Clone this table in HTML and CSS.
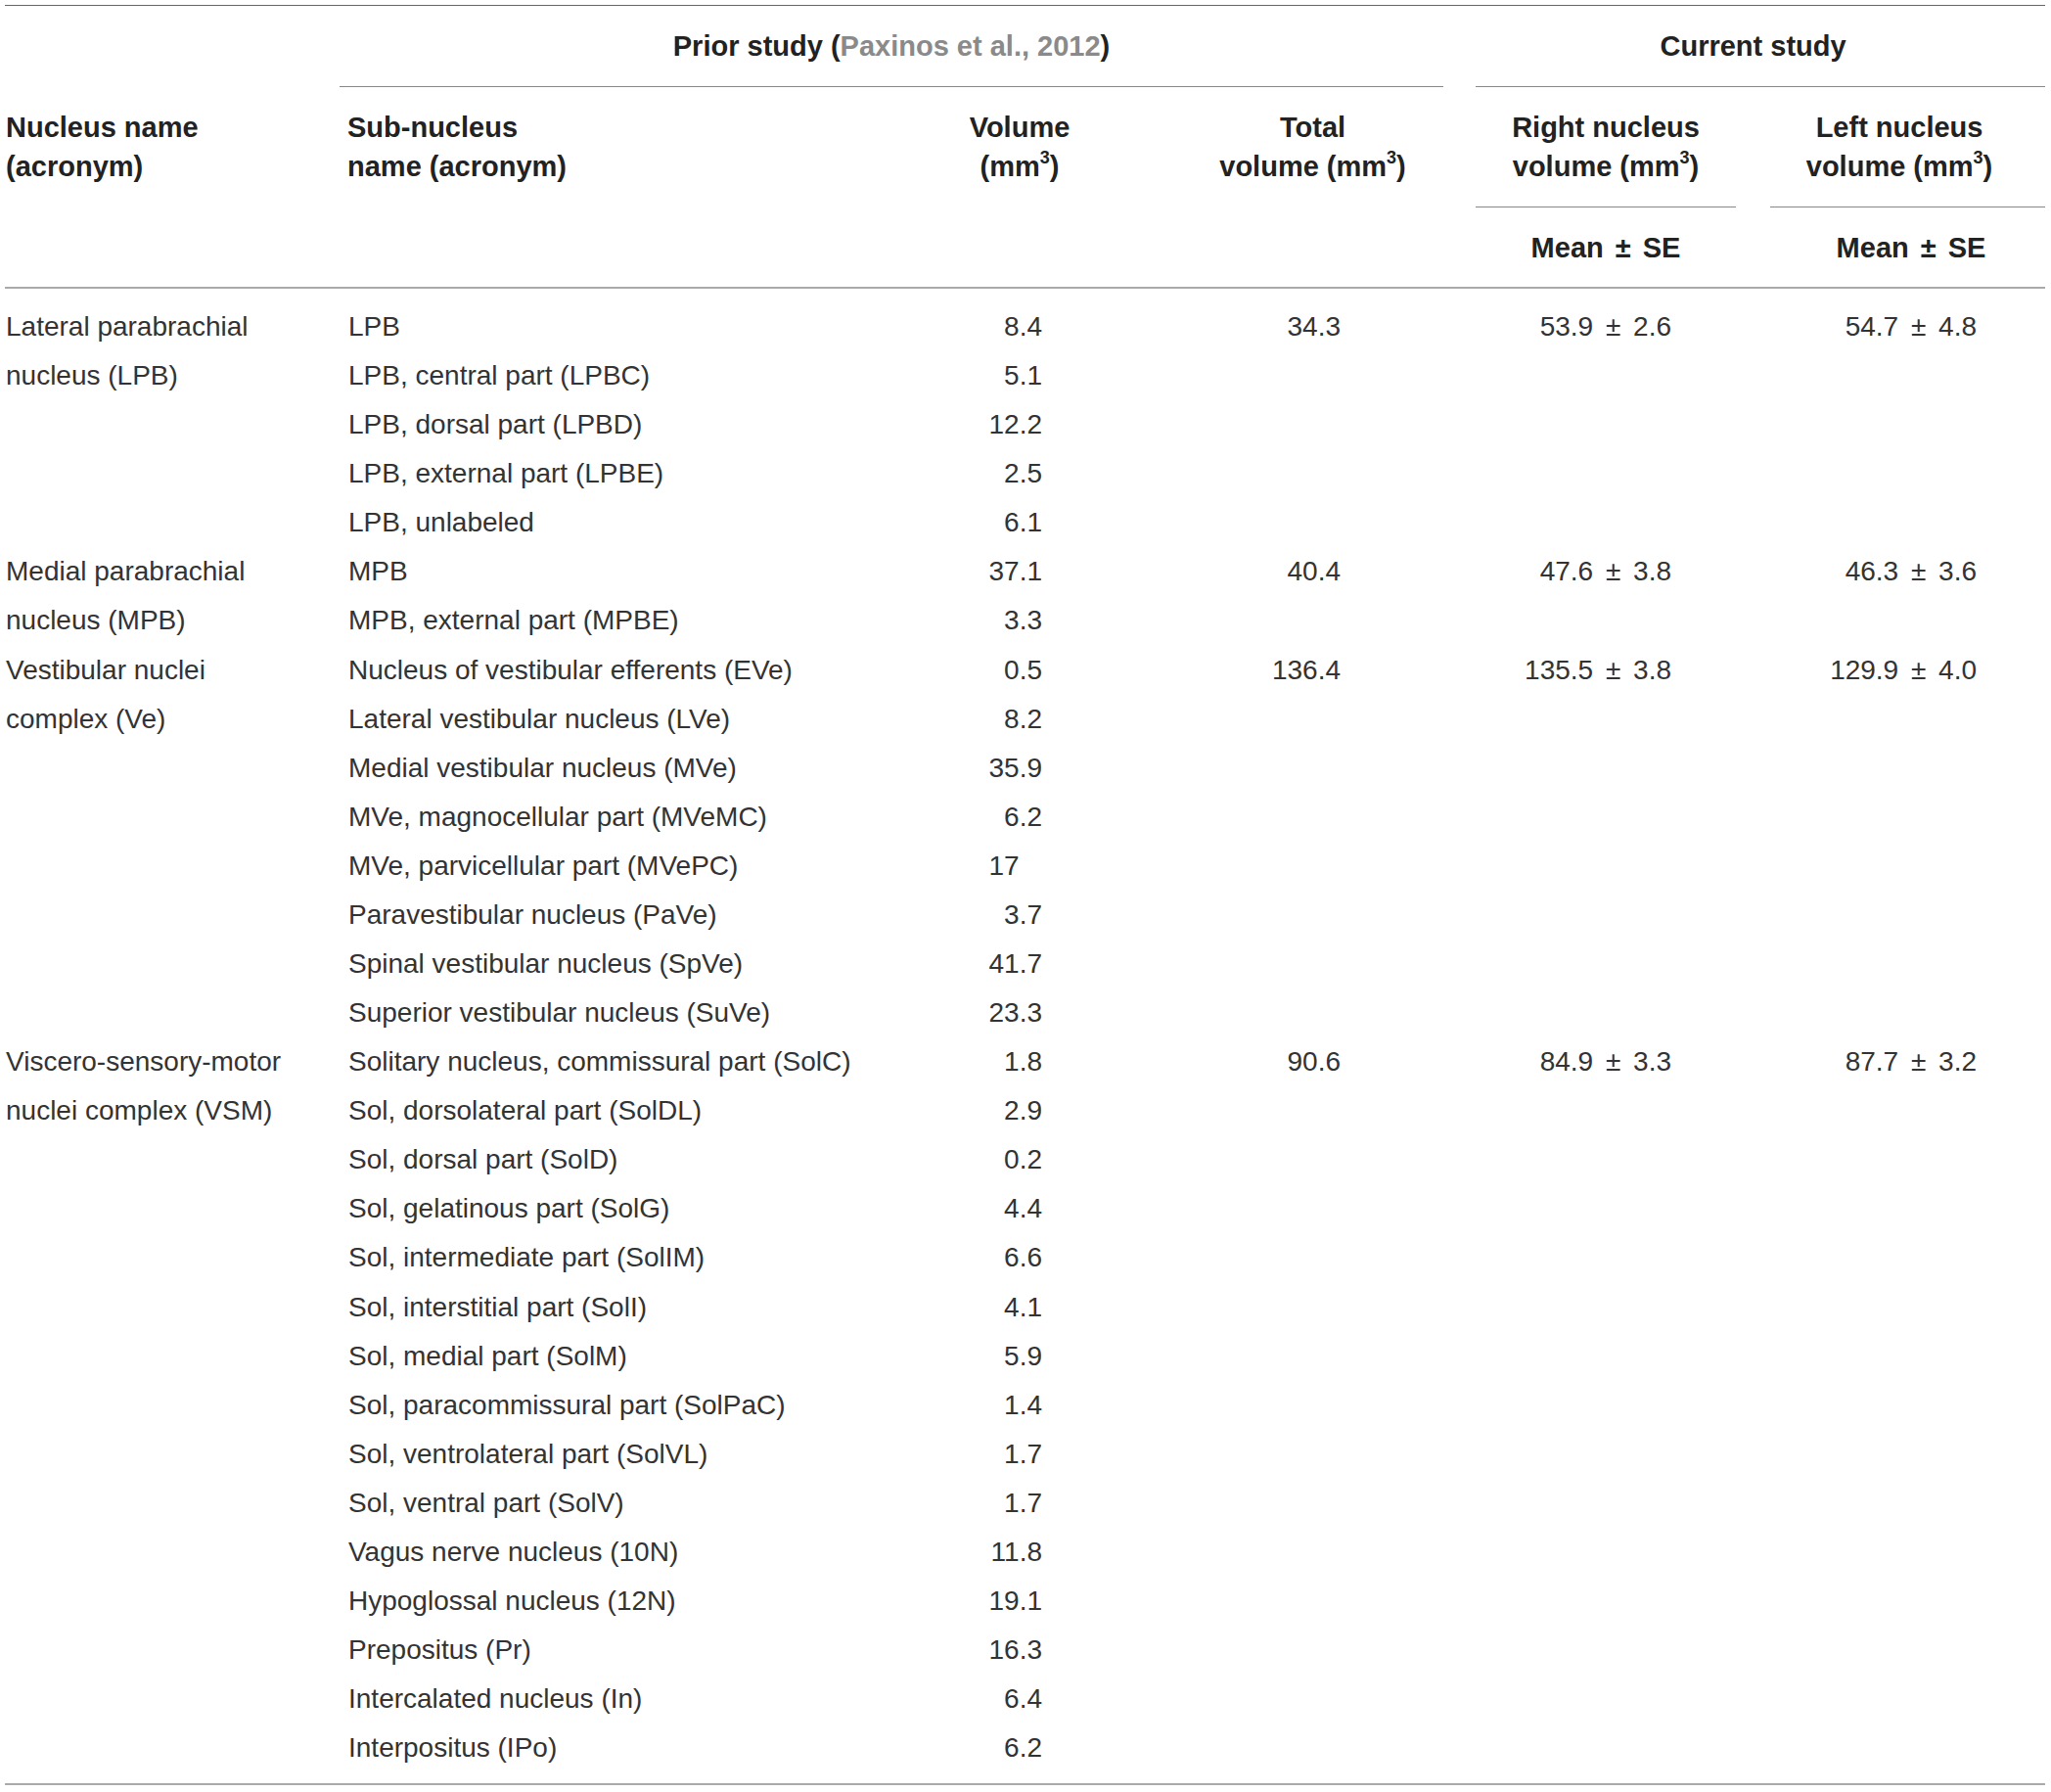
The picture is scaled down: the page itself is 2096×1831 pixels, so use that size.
FILE: index.html
```html
<!DOCTYPE html>
<html lang="en">
<head>
    <meta charset="UTF-8">
    <title>Nucleus volumes</title>
    <link rel="stylesheet" href="styles.css">
</head>
<body>
    <table class="volumes">
        <colgroup>
            <col class="c-name">
            <col class="c-sub">
            <col class="c-vol">
            <col class="c-total">
            <col class="c-gap1">
            <col class="c-right">
            <col class="c-gap2">
            <col class="c-left">
        </colgroup>
        <thead>
            <tr>
                <th rowspan="3" class="name">Nucleus name<br>(acronym)</th>
                <th colspan="3" class="group">Prior study (<a href="#">Paxinos et al., 2012</a>)</th>
                <th rowspan="3"></th>
                <th colspan="3" class="group current">Current study</th>
            </tr>
            <tr>
                <th rowspan="2" class="sub">Sub-nucleus<br>name (acronym)</th>
                <th rowspan="2" class="mid">Volume<br>(mm<sup>3</sup>)</th>
                <th rowspan="2" class="mid">Total<br>volume (mm<sup>3</sup>)</th>
                <th class="mid ruled">Right nucleus<br>volume (mm<sup>3</sup>)</th>
                <th></th>
                <th class="mid ruled left-head">Left nucleus<br>volume (mm<sup>3</sup>)</th>
            </tr>
            <tr>
                <th class="mid stat">Mean ± SE</th>
                <th></th>
                <th class="mid stat left-stat">Mean ± SE</th>
            </tr>
        </thead>
        <tbody>
            <tr class="first">
                <td rowspan="5" class="name">Lateral parabrachial<br>nucleus (LPB)</td>
                <td class="sub">LPB</td><td class="vol">8.4</td><td class="total">34.3</td><td></td><td class="right">53.9 ± 2.6</td><td></td><td class="left">54.7 ± 4.8</td>
            </tr>
            <tr><td class="sub">LPB, central part (LPBC)</td><td class="vol">5.1</td><td></td><td></td><td></td><td></td><td></td></tr>
            <tr><td class="sub">LPB, dorsal part (LPBD)</td><td class="vol">12.2</td><td></td><td></td><td></td><td></td><td></td></tr>
            <tr><td class="sub">LPB, external part (LPBE)</td><td class="vol">2.5</td><td></td><td></td><td></td><td></td><td></td></tr>
            <tr><td class="sub">LPB, unlabeled</td><td class="vol">6.1</td><td></td><td></td><td></td><td></td><td></td></tr>

            <tr>
                <td rowspan="2" class="name">Medial parabrachial<br>nucleus (MPB)</td>
                <td class="sub">MPB</td><td class="vol">37.1</td><td class="total">40.4</td><td></td><td class="right">47.6 ± 3.8</td><td></td><td class="left">46.3 ± 3.6</td>
            </tr>
            <tr><td class="sub">MPB, external part (MPBE)</td><td class="vol">3.3</td><td></td><td></td><td></td><td></td><td></td></tr>

            <tr>
                <td rowspan="8" class="name">Vestibular nuclei<br>complex (Ve)</td>
                <td class="sub">Nucleus of vestibular efferents (EVe)</td><td class="vol">0.5</td><td class="total">136.4</td><td></td><td class="right">135.5 ± 3.8</td><td></td><td class="left">129.9 ± 4.0</td>
            </tr>
            <tr><td class="sub">Lateral vestibular nucleus (LVe)</td><td class="vol">8.2</td><td></td><td></td><td></td><td></td><td></td></tr>
            <tr><td class="sub">Medial vestibular nucleus (MVe)</td><td class="vol">35.9</td><td></td><td></td><td></td><td></td><td></td></tr>
            <tr><td class="sub">MVe, magnocellular part (MVeMC)</td><td class="vol">6.2</td><td></td><td></td><td></td><td></td><td></td></tr>
            <tr><td class="sub">MVe, parvicellular part (MVePC)</td><td class="vol">17<span class="pad">.0</span></td><td></td><td></td><td></td><td></td><td></td></tr>
            <tr><td class="sub">Paravestibular nucleus (PaVe)</td><td class="vol">3.7</td><td></td><td></td><td></td><td></td><td></td></tr>
            <tr><td class="sub">Spinal vestibular nucleus (SpVe)</td><td class="vol">41.7</td><td></td><td></td><td></td><td></td><td></td></tr>
            <tr><td class="sub">Superior vestibular nucleus (SuVe)</td><td class="vol">23.3</td><td></td><td></td><td></td><td></td><td></td></tr>

            <tr>
                <td rowspan="15" class="name">Viscero-sensory-motor<br>nuclei complex (VSM)</td>
                <td class="sub">Solitary nucleus, commissural part (SolC)</td><td class="vol">1.8</td><td class="total">90.6</td><td></td><td class="right">84.9 ± 3.3</td><td></td><td class="left">87.7 ± 3.2</td>
            </tr>
            <tr><td class="sub">Sol, dorsolateral part (SolDL)</td><td class="vol">2.9</td><td></td><td></td><td></td><td></td><td></td></tr>
            <tr><td class="sub">Sol, dorsal part (SolD)</td><td class="vol">0.2</td><td></td><td></td><td></td><td></td><td></td></tr>
            <tr><td class="sub">Sol, gelatinous part (SolG)</td><td class="vol">4.4</td><td></td><td></td><td></td><td></td><td></td></tr>
            <tr><td class="sub">Sol, intermediate part (SolIM)</td><td class="vol">6.6</td><td></td><td></td><td></td><td></td><td></td></tr>
            <tr><td class="sub">Sol, interstitial part (SolI)</td><td class="vol">4.1</td><td></td><td></td><td></td><td></td><td></td></tr>
            <tr><td class="sub">Sol, medial part (SolM)</td><td class="vol">5.9</td><td></td><td></td><td></td><td></td><td></td></tr>
            <tr><td class="sub">Sol, paracommissural part (SolPaC)</td><td class="vol">1.4</td><td></td><td></td><td></td><td></td><td></td></tr>
            <tr><td class="sub">Sol, ventrolateral part (SolVL)</td><td class="vol">1.7</td><td></td><td></td><td></td><td></td><td></td></tr>
            <tr><td class="sub">Sol, ventral part (SolV)</td><td class="vol">1.7</td><td></td><td></td><td></td><td></td><td></td></tr>
            <tr><td class="sub">Vagus nerve nucleus (10N)</td><td class="vol">11.8</td><td></td><td></td><td></td><td></td><td></td></tr>
            <tr><td class="sub">Hypoglossal nucleus (12N)</td><td class="vol">19.1</td><td></td><td></td><td></td><td></td><td></td></tr>
            <tr><td class="sub">Prepositus (Pr)</td><td class="vol">16.3</td><td></td><td></td><td></td><td></td><td></td></tr>
            <tr><td class="sub">Intercalated nucleus (In)</td><td class="vol">6.4</td><td></td><td></td><td></td><td></td><td></td></tr>
            <tr class="last"><td class="sub">Interpositus (IPo)</td><td class="vol">6.2</td><td></td><td></td><td></td><td></td><td></td></tr>
        </tbody>
    </table>
</body>
</html>
```

FILE: styles.css
```css
body {
    margin: 0;
    background-color: white;
    font-family: "Liberation Sans", Arial, sans-serif;
    color: #333;
}
.volumes {
    margin: 5px 0 0 5px;
    width: 2085px;
    table-layout: fixed;
    border-collapse: collapse;
    border-top: 1px solid #666;
    border-bottom: 2px solid #aaa;
}
.c-name { width: 342px; }
.c-sub { width: 529px; }
.c-vol { width: 332px; }
.c-total { width: 267px; }
.c-gap1 { width: 33px; }
.c-right { width: 266px; }
.c-gap2 { width: 35px; }
.c-left { width: 281px; }

thead {
    border-bottom: 2px solid #aaa;
}
th {
    font-size: 29px;
    font-weight: bold;
    line-height: 40px;
    color: #222;
    padding: 21px 0;
    vertical-align: top;
}
th.name {
    text-align: left;
    vertical-align: middle;
    padding-left: 1px;
}
th.group {
    text-align: center;
    border-bottom: 1px solid #888;
}
th.current {
    padding-right: 15px;
}
th.group a {
    color: #8a8a8a;
    text-decoration: none;
}
th.sub {
    text-align: left;
    padding-left: 8px;
}
th.mid {
    text-align: center;
}
th.ruled {
    border-bottom: 1px solid #888;
}
th.left-head {
    padding-right: 17px;
}
th.stat {
    padding-bottom: 20px;
    word-spacing: 4px;
}
th.left-stat {
    padding-left: 7px;
}
sup {
    font-size: 0.62em;
    line-height: 0;
    vertical-align: 0.75em;
}

td {
    font-size: 28px;
    line-height: 50.08px;
    padding: 0;
    vertical-align: top;
    white-space: nowrap;
}
td.name {
    padding-left: 1px;
}
td.sub {
    padding-left: 9px;
}
td.vol {
    text-align: right;
    padding-right: 143px;
}
td.total {
    text-align: right;
    padding-right: 105px;
}
td.right {
    text-align: right;
    padding-right: 66px;
    word-spacing: 5px;
}
td.left {
    text-align: right;
    padding-right: 70px;
    word-spacing: 5px;
}
.pad {
    visibility: hidden;
}
tr.first td {
    padding-top: 14px;
}
tr.last td {
    padding-bottom: 11px;
}
```
